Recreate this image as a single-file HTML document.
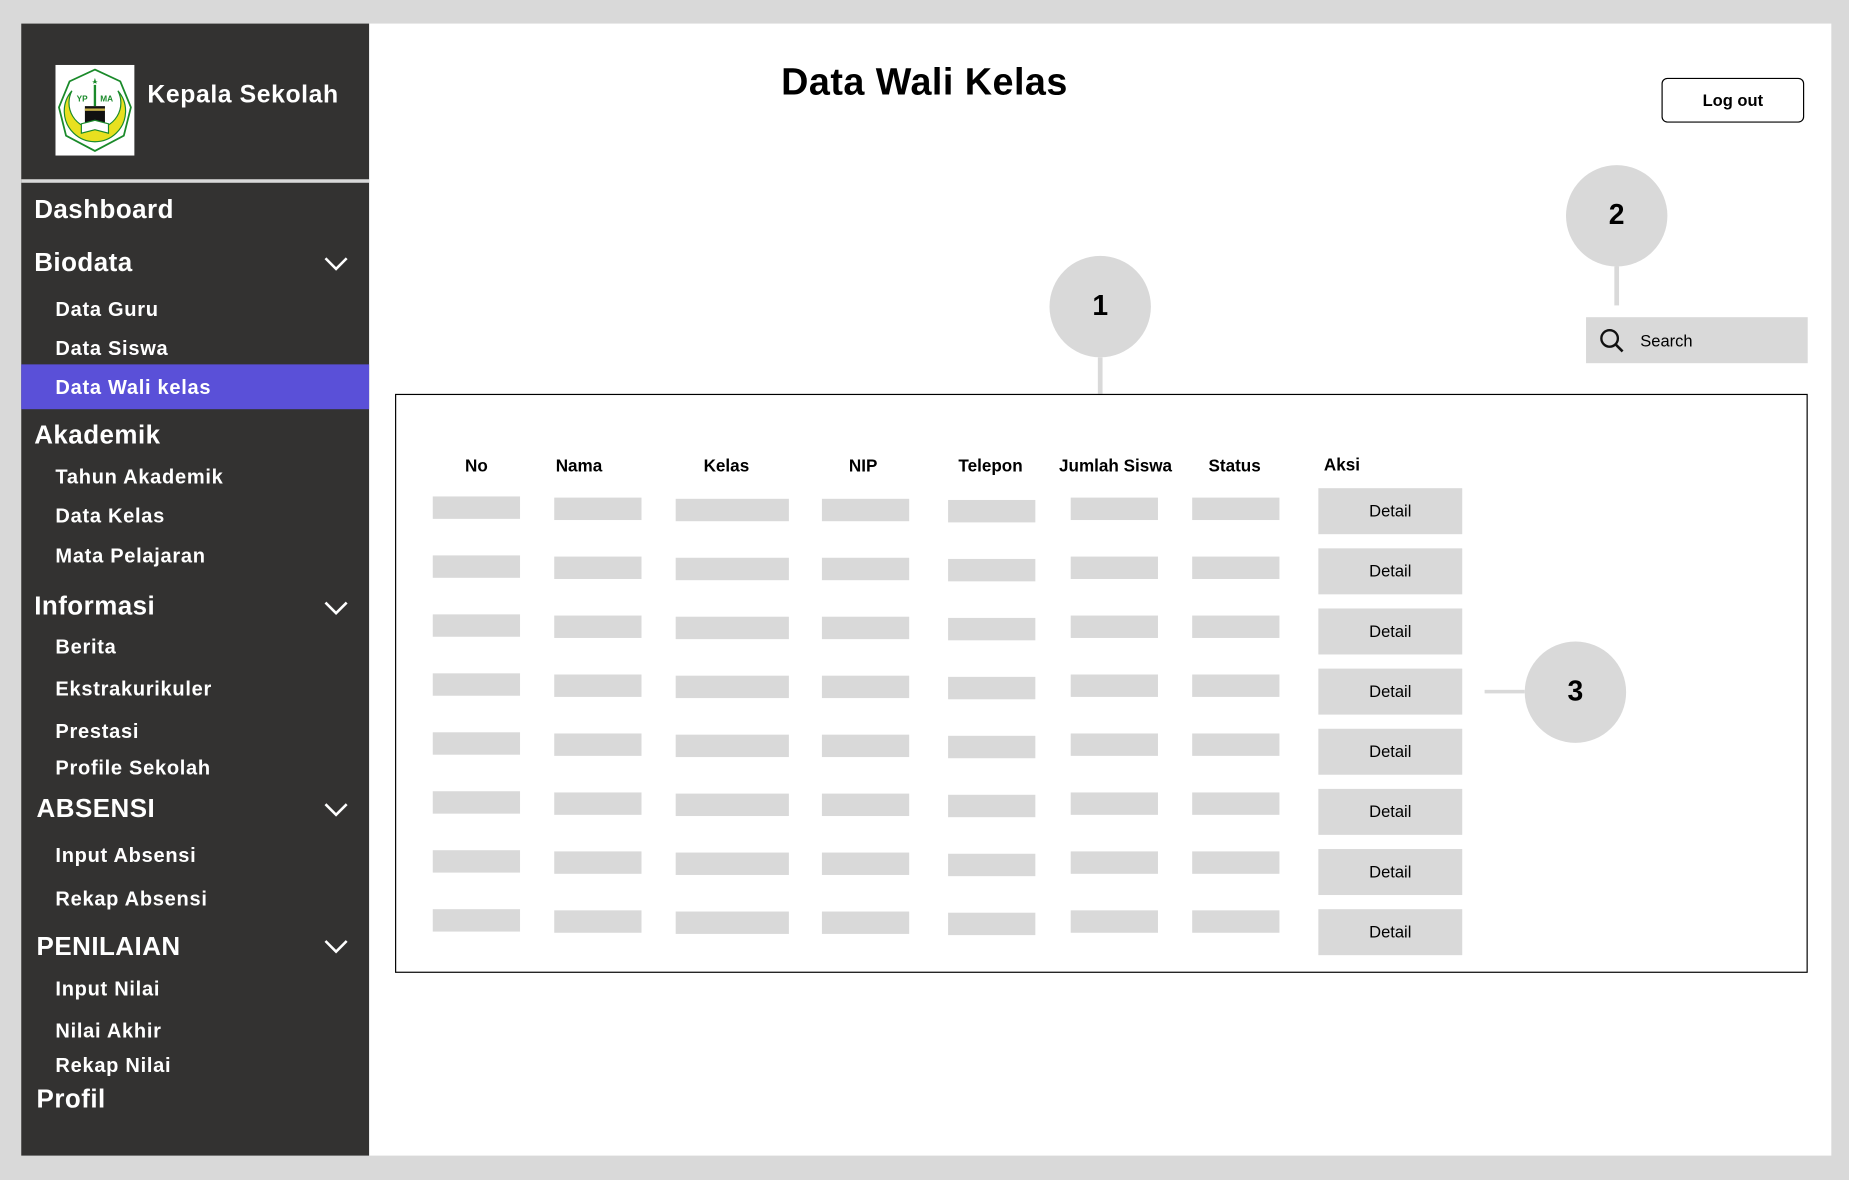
<!DOCTYPE html>
<html><head><meta charset="utf-8"><style>
html,body{margin:0;padding:0;width:1849px;height:1180px;overflow:hidden;background:#d9d9d9}
#w{position:absolute;left:0;top:0;width:1568px;height:1001px;transform:scale(1.17921);transform-origin:0 0;font-family:"Liberation Sans",sans-serif}
.a{position:absolute}
.main{left:18px;top:20px;width:1535px;height:960px;background:#fff}
.side{left:18px;top:20px;width:295px;height:960px;background:#333231}
.sep{left:18px;top:152px;width:295px;height:3px;background:#d9d9d9}
.m{position:absolute;left:29px;color:#fff;font-weight:bold;font-size:22px;line-height:30px;white-space:nowrap;letter-spacing:0.4px;margin-top:1px}
.s{position:absolute;left:47px;color:#fff;font-weight:bold;font-size:17px;line-height:24px;white-space:nowrap;letter-spacing:0.6px;margin-top:1px}
.chev{position:absolute;left:275px;width:20px;height:12px}
.circ{position:absolute;width:86px;height:86px;border-radius:50%;background:#d9d9d9;font-weight:bold;font-size:24px;line-height:86px;text-align:center;color:#000}
.th{position:absolute;top:387px;font-weight:bold;font-size:14.5px;line-height:18px;transform:translateX(-50%);white-space:nowrap}
.p{position:absolute;height:19px;background:#d9d9d9}
.d{position:absolute;left:1118px;width:122px;height:39px;background:#d9d9d9;font-size:14px;line-height:39px;text-align:center}
</style></head><body><div id="w">
<div class="a main"></div>
<div class="a side"></div>
<div class="a sep"></div>
<svg class="a" style="left:47px;top:55px" width="67" height="77" viewBox="0 0 67 77">
<rect width="67" height="77" fill="#fff"/>
<polygon points="33.5,4 55,14 64,36 58,60 33.5,73 9,60 3,36 12,14" fill="none" stroke="#1a8a2a" stroke-width="1.5"/>
<path d="M14,22 A26,26 0 1 0 53,22 A22,22 0 1 1 14,22 Z" fill="#e8e020" stroke="#1a8a2a" stroke-width="1"/>
<text x="18" y="31" font-size="7" font-family="Liberation Sans" fill="#1a8a2a" font-weight="bold">YP</text>
<text x="38" y="31" font-size="7" font-family="Liberation Sans" fill="#1a8a2a" font-weight="bold">MA</text>
<polygon points="33.5,11 35,16 31,14 36,14 32,16" fill="#1a8a2a"/>
<line x1="33.5" y1="17" x2="33.5" y2="35" stroke="#1a8a2a" stroke-width="2"/>
<rect x="25" y="35" width="17" height="14" fill="#111"/>
<rect x="25" y="37" width="17" height="2" fill="#c9b24a"/>
<path d="M22,50 L33.5,47 L45,50 L45,58 L33.5,55 L22,58 Z" fill="#fff" stroke="#1a8a2a" stroke-width="1"/>
</svg>
<div class="a" style="left:125px;top:67px;color:#fff;font-weight:bold;font-size:21px;line-height:28px;letter-spacing:0.5px">Kepala Sekolah</div>
<div class="a" style="left:18px;top:309px;width:295px;height:38px;background:#5a50d8"></div>
<div class="m" style="top:162px">Dashboard</div>
<div class="m" style="top:207px">Biodata</div>
<div class="s" style="top:250px">Data Guru</div>
<div class="s" style="top:283px">Data Siswa</div>
<div class="s" style="top:316px">Data Wali kelas</div>
<div class="m" style="top:353px">Akademik</div>
<div class="s" style="top:392px">Tahun Akademik</div>
<div class="s" style="top:425px">Data Kelas</div>
<div class="s" style="top:459px">Mata Pelajaran</div>
<div class="m" style="top:498px">Informasi</div>
<div class="s" style="top:536px">Berita</div>
<div class="s" style="top:572px">Ekstrakurikuler</div>
<div class="s" style="top:608px">Prestasi</div>
<div class="s" style="top:639px">Profile Sekolah</div>
<div class="m" style="top:670px;left:31px">ABSENSI</div>
<div class="s" style="top:713px">Input Absensi</div>
<div class="s" style="top:750px">Rekap Absensi</div>
<div class="m" style="top:787px;left:31px">PENILAIAN</div>
<div class="s" style="top:826px">Input Nilai</div>
<div class="s" style="top:862px">Nilai Akhir</div>
<div class="s" style="top:891px">Rekap Nilai</div>
<div class="m" style="top:916px;left:31px">Profil</div>
<svg class="chev" style="top:218px" viewBox="0 0 20 12"><path d="M1,1 L10,10 L19,1" fill="none" stroke="#fff" stroke-width="2.2"/></svg>
<svg class="chev" style="top:510px" viewBox="0 0 20 12"><path d="M1,1 L10,10 L19,1" fill="none" stroke="#fff" stroke-width="2.2"/></svg>
<svg class="chev" style="top:681px" viewBox="0 0 20 12"><path d="M1,1 L10,10 L19,1" fill="none" stroke="#fff" stroke-width="2.2"/></svg>
<svg class="chev" style="top:797px" viewBox="0 0 20 12"><path d="M1,1 L10,10 L19,1" fill="none" stroke="#fff" stroke-width="2.2"/></svg>

<div class="a" style="left:584px;width:400px;top:48px;text-align:center;font-weight:bold;font-size:32px;line-height:42px;letter-spacing:0.4px">Data Wali Kelas</div>
<div class="a" style="left:1409px;top:66px;width:119px;height:36px;border:1px solid #000;border-radius:5px;text-align:center;line-height:36px;font-weight:bold;font-size:14px">Log out</div>

<div class="circ" style="left:1328px;top:140px">2</div>
<div class="a" style="left:1369px;top:226px;width:4px;height:33px;background:#d9d9d9"></div>
<div class="a" style="left:1345px;top:269px;width:188px;height:39px;background:#d9d9d9"></div>
<svg class="a" style="left:1356px;top:278px" width="22" height="22" viewBox="0 0 22 22"><circle cx="9" cy="9" r="7" fill="none" stroke="#111" stroke-width="2"/><line x1="14" y1="14" x2="20" y2="20" stroke="#111" stroke-width="2.2"/></svg>
<div class="a" style="left:1391px;top:280px;font-size:14px;line-height:18px">Search</div>

<div class="circ" style="left:890px;top:217px">1</div>
<div class="a" style="left:931px;top:303px;width:4px;height:31px;background:#d9d9d9"></div>

<div class="a" style="left:335px;top:334px;width:1196px;height:489px;border:1px solid #000"></div>

<div class="a" style="left:1259px;top:585px;width:34px;height:3px;background:#d9d9d9"></div>
<div class="circ" style="left:1293px;top:544px">3</div>

<div class="th" style="left:404px">No</div>
<div class="th" style="left:491px">Nama</div>
<div class="th" style="left:616px">Kelas</div>
<div class="th" style="left:732px">NIP</div>
<div class="th" style="left:840px">Telepon</div>
<div class="th" style="left:946px">Jumlah Siswa</div>
<div class="th" style="left:1047px">Status</div>
<div class="th" style="left:1138px;top:386px">Aksi</div>

<div style="position:absolute;left:0;top:0">
<div class="p" style="left:367px;top:421px;width:74px"></div><div class="p" style="left:470px;top:422px;width:74px"></div><div class="p" style="left:573px;top:423px;width:96px"></div><div class="p" style="left:697px;top:423px;width:74px"></div><div class="p" style="left:804px;top:424px;width:74px"></div><div class="p" style="left:908px;top:422px;width:74px"></div><div class="p" style="left:1011px;top:422px;width:74px"></div><div class="d" style="top:414px">Detail</div>
</div>
<div style="position:absolute;left:0;top:50px">
<div class="p" style="left:367px;top:421px;width:74px"></div><div class="p" style="left:470px;top:422px;width:74px"></div><div class="p" style="left:573px;top:423px;width:96px"></div><div class="p" style="left:697px;top:423px;width:74px"></div><div class="p" style="left:804px;top:424px;width:74px"></div><div class="p" style="left:908px;top:422px;width:74px"></div><div class="p" style="left:1011px;top:422px;width:74px"></div><div class="d" style="top:415px">Detail</div>
</div>
<div style="position:absolute;left:0;top:100px">
<div class="p" style="left:367px;top:421px;width:74px"></div><div class="p" style="left:470px;top:422px;width:74px"></div><div class="p" style="left:573px;top:423px;width:96px"></div><div class="p" style="left:697px;top:423px;width:74px"></div><div class="p" style="left:804px;top:424px;width:74px"></div><div class="p" style="left:908px;top:422px;width:74px"></div><div class="p" style="left:1011px;top:422px;width:74px"></div><div class="d" style="top:416px">Detail</div>
</div>
<div style="position:absolute;left:0;top:150px">
<div class="p" style="left:367px;top:421px;width:74px"></div><div class="p" style="left:470px;top:422px;width:74px"></div><div class="p" style="left:573px;top:423px;width:96px"></div><div class="p" style="left:697px;top:423px;width:74px"></div><div class="p" style="left:804px;top:424px;width:74px"></div><div class="p" style="left:908px;top:422px;width:74px"></div><div class="p" style="left:1011px;top:422px;width:74px"></div><div class="d" style="top:417px">Detail</div>
</div>
<div style="position:absolute;left:0;top:200px">
<div class="p" style="left:367px;top:421px;width:74px"></div><div class="p" style="left:470px;top:422px;width:74px"></div><div class="p" style="left:573px;top:423px;width:96px"></div><div class="p" style="left:697px;top:423px;width:74px"></div><div class="p" style="left:804px;top:424px;width:74px"></div><div class="p" style="left:908px;top:422px;width:74px"></div><div class="p" style="left:1011px;top:422px;width:74px"></div><div class="d" style="top:418px">Detail</div>
</div>
<div style="position:absolute;left:0;top:250px">
<div class="p" style="left:367px;top:421px;width:74px"></div><div class="p" style="left:470px;top:422px;width:74px"></div><div class="p" style="left:573px;top:423px;width:96px"></div><div class="p" style="left:697px;top:423px;width:74px"></div><div class="p" style="left:804px;top:424px;width:74px"></div><div class="p" style="left:908px;top:422px;width:74px"></div><div class="p" style="left:1011px;top:422px;width:74px"></div><div class="d" style="top:419px">Detail</div>
</div>
<div style="position:absolute;left:0;top:300px">
<div class="p" style="left:367px;top:421px;width:74px"></div><div class="p" style="left:470px;top:422px;width:74px"></div><div class="p" style="left:573px;top:423px;width:96px"></div><div class="p" style="left:697px;top:423px;width:74px"></div><div class="p" style="left:804px;top:424px;width:74px"></div><div class="p" style="left:908px;top:422px;width:74px"></div><div class="p" style="left:1011px;top:422px;width:74px"></div><div class="d" style="top:420px">Detail</div>
</div>
<div style="position:absolute;left:0;top:350px">
<div class="p" style="left:367px;top:421px;width:74px"></div><div class="p" style="left:470px;top:422px;width:74px"></div><div class="p" style="left:573px;top:423px;width:96px"></div><div class="p" style="left:697px;top:423px;width:74px"></div><div class="p" style="left:804px;top:424px;width:74px"></div><div class="p" style="left:908px;top:422px;width:74px"></div><div class="p" style="left:1011px;top:422px;width:74px"></div><div class="d" style="top:421px">Detail</div>
</div>
</div></body></html>
